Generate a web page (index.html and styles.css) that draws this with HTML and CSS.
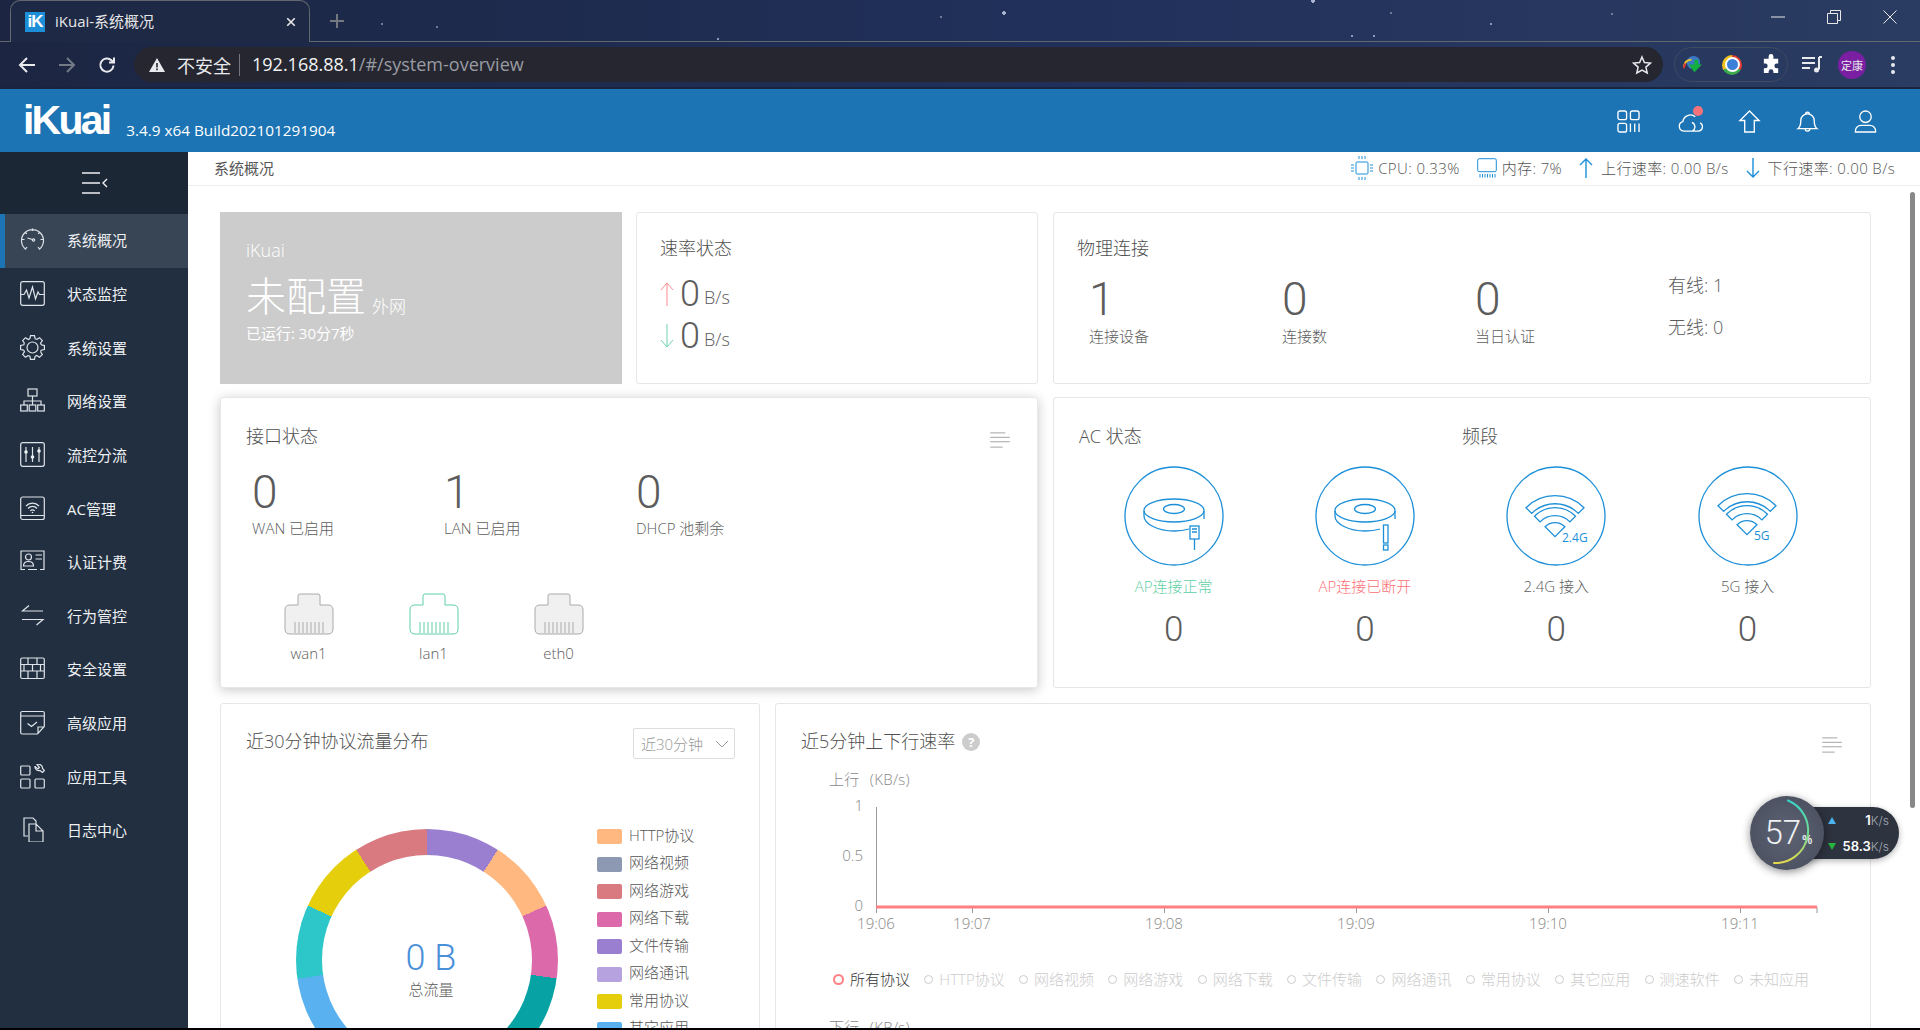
FILE: index.html
```html
<!doctype html>
<html lang="en">

<head>
<meta charset="utf-8">
<title>iKuai-系统概况</title>

<link rel="stylesheet" href="styles.css">

</head>

<body>

<div class="browser">
  <div class="tab-strip">
    <div class="tab">
      <span class="favicon">iK</span>
      <span class="tab-title">iKuai-系统概况</span>
      <svg class="tab-close" viewBox="0 0 12 12"><path d="M1.5 1.5l9 9M10.5 1.5l-9 9"/></svg>
    </div>
    <svg class="tab-new" viewBox="0 0 16 16"><path d="M8 1v14M1 8h14"/></svg>
    <div class="window-controls">
      <svg viewBox="0 0 14 14"><path d="M0 7h14"/></svg>
      <svg viewBox="0 0 14 14"><path d="M.5 3.5h10v10H.5zM3.5 3.5V.5h10v10h-3"/></svg>
      <svg viewBox="0 0 14 14"><path d="M.5.5l13 13M13.5.5l-13 13"/></svg>
    </div>
  </div>
  <div class="toolbar">
    <svg class="nav-btn" viewBox="0 0 18 18"><path d="M17 9H2M9 2L2 9l7 7"/></svg>
    <svg class="nav-btn dim" viewBox="0 0 18 18"><path d="M1 9h15M9 2l7 7-7 7"/></svg>
    <svg class="nav-btn" viewBox="0 0 18 18"><path d="M15.5 9.5a6.6 6.6 0 1 1-2-5.2L16 6.5M16 1.5v5h-5"/></svg>
    <div class="omnibox">
      <svg class="warn" viewBox="0 0 16 14"><path d="M8 0l8 14H0z"/><path class="warn-mark" d="M7.2 5h1.6v4.6H7.2zM7.2 10.6h1.6v1.6H7.2z"/></svg>
      <span class="not-secure">不安全</span>
      <span class="omni-sep"></span>
      <span class="url"><b>192.168.88.1</b>/#/system-overview</span>
      <svg class="star" viewBox="0 0 20 20"><path d="M10 2l2.4 5.5 6 .6-4.5 4 1.3 5.9L10 15l-5.2 3 1.3-5.9-4.5-4 6-.6z"/></svg>
    </div>
    <div class="ext-pill">
      <svg class="ext-ico" viewBox="0 0 22 22">
        <circle cx="12" cy="9" r="7" fill="#3a78c8"/>
        <path d="M2 13c1-5 4-7 8-7" stroke="#e8c02c" stroke-width="2" fill="none"/>
        <path d="M2 15c0-2 .5-3 1.5-5" stroke="#d33" stroke-width="2" fill="none"/>
        <path d="M7 11h6V6h4v5h4l-8 8z" fill="#12b03c"/>
      </svg>
      <span class="chrome-ico"></span>
      <svg class="ext-ico" viewBox="0 0 22 22"><path fill="#fff" d="M8 2.5a2.5 2.5 0 0 1 5 0V5h5v5h-1.500a2.500 2.500 0 0 0 0 5H18v5h-5v-1.500a2.500 2.500 0 0 0-5 0V20H3v-5h1.500a2.500 2.500 0 0 0 0-5H3V5h5z"/></svg>
    </div>
    <svg class="media-ico" viewBox="0 0 22 18"><path d="M1 2h13M1 7h13M1 12h8"/><path d="M18 1v12.500M18 1h3"/><circle class="solid" cx="15.500" cy="14" r="2.500"/></svg>
    <span class="avatar">定康</span>
    <span class="kebab"><i></i><i></i><i></i></span>
  </div>
</div>

<header class="app-header">
  <span class="logo">iKuai</span>
  <span class="version">3.4.9 x64 Build202101291904</span>
  <div class="header-icons">
    <svg viewBox="0 0 24 24"><rect x="1" y="1" width="9" height="9" rx="2"/><rect x="14" y="1" width="9" height="9" rx="2"/><rect x="1" y="14" width="9" height="9" rx="2"/><path d="M14 14v9M18.500 14v9M23 14v9"/></svg>
    <span class="cloud-wrap">
      <svg viewBox="0 0 26 24"><path d="M6 22a5 5 0 0 1-1-9.800A8 8 0 0 1 18 7M6 22h15a4.500 4.500 0 0 0 2-8.500M15 22a5 5 0 0 0-.5-9"/></svg>
      <i class="cloud-dot"></i>
    </span>
    <svg viewBox="0 0 24 24"><path d="M12 1L2 11h5v12h10V11h5z"/></svg>
    <svg viewBox="0 0 24 24"><path d="M2 19.500c3-2 3-5 3-8.500a7 7 0 0 1 14 0c0 3.500 0 6.500 3 8.500zM10 4.200a2 2 0 0 1 4 0M9.500 19.500a2.500 2.500 0 0 0 5 0"/></svg>
    <svg viewBox="0 0 24 24"><circle cx="12" cy="7" r="6"/><path d="M1.500 23v-1.500c0-3 2.500-5.500 6-5.500h9c3.500 0 6 2.500 6 5.500V23z"/></svg>
  </div>
</header>

<div class="shell">

  <nav class="side">
    <div class="side-toggle">
      <svg viewBox="0 0 26 22"><path d="M0 1h18M0 11h18M0 21h18M25 7l-4 4 4 4"/></svg>
    </div>

    <a class="side-item active">
      <svg viewBox="0 0 25 25"><path d="M6 22.500a11 11 0 1 1 13 0M12.500 1.500v2.500M2 12.500h2.500M23 12.500h-2.500M5 5l1.800 1.800M20 5l-1.800 1.800M5.500 22l1.500-2M19.500 22L18 20M7.500 11l5 1.500"/><circle cx="13.500" cy="13" r="1.200"/></svg>
      系统概况
    </a>
    <a class="side-item">
      <svg viewBox="0 0 25 25"><rect x=".7" y=".7" width="23.600" height="23.600" rx="2"/><path d="M1 13.500h3l2.500-4.500 2.500 8 3.500-11 3 12 2.500-7 1.500 2.500H24"/></svg>
      状态监控
    </a>
    <a class="side-item">
      <svg viewBox="0 0 25 25">
        <path id="cog" d="M9.840 3.800L10.500.6h4l.66 3.200A9.100 9.100 0 0 1 16.770 4.470"/>
        <use href="#cog" transform="rotate(45 12.500 12.500)"/>
        <use href="#cog" transform="rotate(90 12.500 12.500)"/>
        <use href="#cog" transform="rotate(135 12.500 12.500)"/>
        <use href="#cog" transform="rotate(180 12.500 12.500)"/>
        <use href="#cog" transform="rotate(225 12.500 12.500)"/>
        <use href="#cog" transform="rotate(270 12.500 12.500)"/>
        <use href="#cog" transform="rotate(315 12.500 12.500)"/>
        <circle cx="12.500" cy="12.500" r="5.500"/>
      </svg>
      系统设置
    </a>
    <a class="side-item">
      <svg viewBox="0 0 25 25"><rect x="8" y="1" width="9" height="7"/><path d="M12.500 8v5M4 17v-4h17v4M12.500 13v4"/><rect x=".7" y="17" width="6.600" height="6"/><rect x="9.200" y="17" width="6.600" height="6"/><rect x="17.700" y="17" width="6.600" height="6"/></svg>
      网络设置
    </a>
    <a class="side-item">
      <svg viewBox="0 0 25 25"><rect x=".7" y=".7" width="23.600" height="23.600" rx="2"/><path d="M6 5v15M12.500 5v15M19 5v15"/><circle class="solid" cx="6" cy="10" r="1.800"/><circle class="solid" cx="12.500" cy="15" r="1.800"/><circle class="solid" cx="19" cy="9" r="1.800"/></svg>
      流控分流
    </a>
    <a class="side-item">
      <svg viewBox="0 0 25 25"><rect x=".7" y="1" width="23.600" height="22.500" rx="2"/><path d="M1 19.500h23M6 10a9 9 0 0 1 13 0M8 12.500a6 6 0 0 1 9 0M10.300 14.800a3 3 0 0 1 4.400 0"/><circle class="solid" cx="12.500" cy="16.500" r=".8"/></svg>
      AC管理
    </a>
    <a class="side-item">
      <svg viewBox="0 0 25 25"><path d="M5 20.500H1V2h23v18.500h-4M8 20.500h9"/><circle cx="8.500" cy="8" r="3"/><path d="M3.500 17c0-3 2-4.500 5-4.500s5 1.500 5 4.500zM15.500 6H22M15.500 10H22"/></svg>
      认证计费
    </a>
    <a class="side-item">
      <svg viewBox="0 0 25 25"><path d="M23 8H2.500L9 2.500M2 16.500h21L16.500 22"/></svg>
      行为管控
    </a>
    <a class="side-item">
      <svg viewBox="0 0 25 25"><rect x=".7" y="2" width="23.600" height="20.500" rx="1.500"/><path d="M1 8.500h23M1 15h23M8 2v6.500M17 2v6.500M4 8.500V15M12.500 8.500V15M20.500 8.500V15M8 15v7.500M17 15v7.500"/></svg>
      安全设置
    </a>
    <a class="side-item">
      <svg viewBox="0 0 25 25"><path d="M24.300 16.500V3a1.500 1.500 0 0 0-1.500-1.500H2.200A1.500 1.500 0 0 0 .7 3v19.500A1.500 1.500 0 0 0 2.200 24h15.300zM18 24v-7h6.300M1 6h23M7.500 13.500l4 3 5.500-4.500"/></svg>
      高级应用
    </a>
    <a class="side-item">
      <svg viewBox="0 0 25 25"><rect x=".7" y="2" width="9.300" height="9" rx="1"/><rect x=".7" y="15" width="9.300" height="9" rx="1"/><rect x="15" y="15" width="9.300" height="9" rx="1"/><path d="M15 2.500l3 2.500 1.500-1.500-2.500-3a4 4 0 0 1 5.500 4l2 2-2 2-2.500-2a4 4 0 0 1-5-4.500z"/></svg>
      应用工具
    </a>
    <a class="side-item">
      <svg viewBox="0 0 25 25"><path d="M8 19H4V1h9l3 3v3M9 7h7l7 7v11H9zM16 7v7h7"/></svg>
      日志中心
    </a>
  </nav>

  <main class="main">
    <div class="crumbs">
      <span class="crumb-name">系统概况</span>
      <div class="top-stats">
        <span class="top-stat">
          <svg class="stat-cpu" viewBox="0 0 22 24"><rect x="5" y="6" width="12" height="12" rx="1"/><path d="M8 0v3M11 0v3M14 0v3M8 21v3M11 21v3M14 21v3M0 9h3M0 12h3M0 15h3M19 9h3M19 12h3M19 15h3"/></svg>
          CPU: 0.33%
        </span>
        <span class="top-stat">
          <svg class="stat-mem" viewBox="0 0 20 20"><rect x=".7" y=".7" width="18.600" height="13" rx="1.500"/><path d="M3 16v3.500M5.500 16v3.500M8 16v3.500M10.500 16v3.500M13 16v3.500M15.500 16v3.500M18 16v3.500" /></svg>
          内存: 7%
        </span>
        <span class="top-stat">
          <svg class="stat-arrow" viewBox="0 0 14 20"><path d="M7 20V1M1 7l6-6 6 6"/></svg>
          上行速率: 0.00 B/s
        </span>
        <span class="top-stat">
          <svg class="stat-arrow" viewBox="0 0 14 20"><path d="M7 0v19M1 13l6 6 6-6"/></svg>
          下行速率: 0.00 B/s
        </span>
      </div>
    </div>

    <div class="content">

      <div class="row-halves row-top">
        <div class="row-pair">
          <section class="wan-card">
            <div class="wan-brand">iKuai</div>
            <div class="wan-state">未配置<small>外网</small></div>
            <div class="wan-uptime">已运行: 30分7秒</div>
          </section>

          <section class="card rate-card">
            <h2 class="card-title">速率状态</h2>
            <div class="rate-row">
              <svg class="rate-up" viewBox="0 0 14 24"><path d="M7 24V1M1 8l6-7 6 7"/></svg>
              <span class="rate-num">0</span><span class="rate-unit">B/s</span>
            </div>
            <div class="rate-row">
              <svg class="rate-down" viewBox="0 0 14 24"><path d="M7 0v23M1 16l6 7 6-7"/></svg>
              <span class="rate-num">0</span><span class="rate-unit">B/s</span>
            </div>
          </section>
        </div>

        <section class="card phys-card">
          <h2 class="card-title">物理连接</h2>
          <div class="phys-stats">
            <div class="stat"><div class="stat-num">1</div><div class="stat-label">连接设备</div></div>
            <div class="stat"><div class="stat-num">0</div><div class="stat-label">连接数</div></div>
            <div class="stat"><div class="stat-num">0</div><div class="stat-label">当日认证</div></div>
            <div class="phys-links">
              <div>有线: 1</div>
              <div>无线: 0</div>
            </div>
          </div>
        </section>
      </div>

      <div class="row-halves row-mid">
        <section class="card tall iface-card">
          <div class="card-head">
            <h2 class="card-title">接口状态</h2>
            <svg class="list-ico" viewBox="0 0 22 18"><path d="M0 1h17M0 6h22M0 11h22M0 17h14"/></svg>
          </div>
          <div class="iface-stats">
            <div class="stat"><div class="stat-num">0</div><div class="stat-label">WAN 已启用</div></div>
            <div class="stat"><div class="stat-num">1</div><div class="stat-label">LAN 已启用</div></div>
            <div class="stat"><div class="stat-num">0</div><div class="stat-label">DHCP 池剩余</div></div>
          </div>
          <div class="ports">
            <div class="port">
              <svg viewBox="0 0 50 42"><path d="M14 12V3q0-2 2-2h18q2 0 2 2v9h8q5 0 5 5v19q0 5-5 5H6q-5 0-5-5V17q0-5 5-5z"/><path class="pins" d="M11 29v11M15 29v11M19 29v11M23 29v11M27 29v11M31 29v11M35 29v11M39 29v11"/></svg>
              <span>wan1</span>
            </div>
            <div class="port up">
              <svg viewBox="0 0 50 42"><path d="M14 12V3q0-2 2-2h18q2 0 2 2v9h8q5 0 5 5v19q0 5-5 5H6q-5 0-5-5V17q0-5 5-5z"/><path class="pins" d="M11 29v11M15 29v11M19 29v11M23 29v11M27 29v11M31 29v11M35 29v11M39 29v11"/></svg>
              <span>lan1</span>
            </div>
            <div class="port">
              <svg viewBox="0 0 50 42"><path d="M14 12V3q0-2 2-2h18q2 0 2 2v9h8q5 0 5 5v19q0 5-5 5H6q-5 0-5-5V17q0-5 5-5z"/><path class="pins" d="M11 29v11M15 29v11M19 29v11M23 29v11M27 29v11M31 29v11M35 29v11M39 29v11"/></svg>
              <span>eth0</span>
            </div>
          </div>
        </section>

        <section class="card tall ac-card">
          <div class="ac-head">
            <h2 class="card-title">AC 状态</h2>
            <h2 class="card-title">频段</h2>
          </div>
          <div class="ac-grid">
            <div class="ac-item">
              <svg viewBox="0 0 100 100"><circle cx="50" cy="50" r="49"/><ellipse cx="50" cy="44.500" rx="30" ry="11.500"/><ellipse cx="50" cy="43" rx="10.500" ry="4.500"/><path d="M20 45v5c0 8 14 15 30 15 6 0 11-.8 15-2M80 45v8"/><rect x="66" y="60" width="9" height="13"/><path d="M70.500 73v11M68 63h5M68 66h5"/></svg>
              <div class="ac-label ok">AP连接正常</div>
              <div class="ac-num">0</div>
            </div>
            <div class="ac-item">
              <svg viewBox="0 0 100 100"><circle cx="50" cy="50" r="49"/><ellipse cx="50" cy="44.500" rx="30" ry="11.500"/><ellipse cx="50" cy="43" rx="10.500" ry="4.500"/><path d="M20 45v5c0 8 14 15 30 15 6 0 11-.8 15-2M80 45v8"/><rect x="68.500" y="59" width="4.500" height="18"/><rect x="68.500" y="79" width="4.500" height="5"/></svg>
              <div class="ac-label bad">AP连接已断开</div>
              <div class="ac-num">0</div>
            </div>
            <div class="ac-item">
              <svg viewBox="0 0 100 100"><circle cx="50" cy="50" r="49"/><path d="M20 41.700A41 41 0 0 1 78 41.700L72.300 47.400A33 33 0 0 0 25.700 47.400zM28.500 50.200A29 29 0 0 1 69.500 50.200L63.850 55.850A21 21 0 0 0 34.150 55.850zM39.100 60.800A14 14 0 0 1 58.900 60.800L49 70.700z"/><text x="56" y="76">2.4G</text></svg>
              <div class="ac-label">2.4G 接入</div>
              <div class="ac-num">0</div>
            </div>
            <div class="ac-item">
              <svg viewBox="0 0 100 100"><circle cx="50" cy="50" r="49"/><path d="M20 39.700A41 41 0 0 1 78 39.700L72.300 45.400A33 33 0 0 0 25.700 45.400zM28.500 48.200A29 29 0 0 1 69.500 48.200L63.850 53.850A21 21 0 0 0 34.150 53.850zM39.100 58.800A14 14 0 0 1 58.900 58.800L49 68.700z"/><text x="56" y="74">5G</text></svg>
              <div class="ac-label">5G 接入</div>
              <div class="ac-num">0</div>
            </div>
          </div>
        </section>
      </div>

      <div class="row-bottom">
        <section class="card dist-card">
          <div class="card-head">
            <h2 class="card-title">近30分钟协议流量分布</h2>
            <div class="range-select">
              近30分钟
              <svg viewBox="0 0 14 8"><path d="M1 1l6 6 6-6"/></svg>
            </div>
          </div>
          <div class="dist-body">
            <div class="donut">
              <div class="donut-hole">
                <div class="donut-total">0 B</div>
                <div class="donut-label">总流量</div>
              </div>
            </div>
            <ul class="legend">
              <li><i class="sw-http"></i>HTTP协议</li>
              <li><i class="sw-video"></i>网络视频</li>
              <li><i class="sw-game"></i>网络游戏</li>
              <li><i class="sw-down"></i>网络下载</li>
              <li><i class="sw-file"></i>文件传输</li>
              <li><i class="sw-msg"></i>网络通讯</li>
              <li><i class="sw-common"></i>常用协议</li>
              <li><i class="sw-other"></i>其它应用</li>
            </ul>
          </div>
        </section>

        <section class="card rate-chart-card">
          <div class="card-head">
            <h2 class="card-title">近5分钟上下行速率<span class="help">?</span></h2>
            <svg class="list-ico" viewBox="0 0 22 18"><path d="M0 1h17M0 6h22M0 11h22M0 17h14"/></svg>
          </div>
          <svg class="chart" viewBox="0 0 1040 170">
            <text class="axis-name" x="28" y="21">上行 (KB/s)</text>
            <text class="axis-text" x="62" y="47" text-anchor="end">1</text>
            <text class="axis-text" x="62" y="97" text-anchor="end">0.5</text>
            <text class="axis-text" x="62" y="147" text-anchor="end">0</text>
            <path class="axis-line" d="M75.500 43v106M171.500 143v6M363.500 143v6M555.500 143v6M747.500 143v6M939.500 143v6M1016 143v6"/>
            <path class="series" d="M75 143h941"/>
            <text class="axis-text" x="75" y="165" text-anchor="middle">19:06</text>
            <text class="axis-text" x="171" y="165" text-anchor="middle">19:07</text>
            <text class="axis-text" x="363" y="165" text-anchor="middle">19:08</text>
            <text class="axis-text" x="555" y="165" text-anchor="middle">19:09</text>
            <text class="axis-text" x="747" y="165" text-anchor="middle">19:10</text>
            <text class="axis-text" x="939" y="165" text-anchor="middle">19:11</text>
          </svg>
          <ul class="chart-legend">
            <li class="on">所有协议</li>
            <li>HTTP协议</li>
            <li>网络视频</li>
            <li>网络游戏</li>
            <li>网络下载</li>
            <li>文件传输</li>
            <li>网络通讯</li>
            <li>常用协议</li>
            <li>其它应用</li>
            <li>测速软件</li>
            <li>未知应用</li>
          </ul>
          <div class="chart-next">下行 (KB/s)</div>
        </section>
      </div>

    </div>

    <div class="scroll-thumb"></div>

    <div class="speed-widget">
      <div class="widget-pill">
        <div class="widget-row"><i class="w-up"></i><b>1</b><span>K/s</span></div>
        <div class="widget-row"><i class="w-down"></i><b>58.3</b><span>K/s</span></div>
      </div>
      <div class="widget-dial">
        <svg viewBox="0 0 74 74">
          <defs><linearGradient id="arc" x1="0" y1="0" x2="0" y2="1"><stop offset="0" stop-color="#35d6c6"/><stop offset=".6" stop-color="#7ddc88"/><stop offset="1" stop-color="#e6d84a"/></linearGradient></defs>
          <path d="M38 4.500A32.500 32.500 0 0 1 24 67"/>
        </svg>
        <span class="dial-num">57</span><span class="dial-pct">%</span>
      </div>
    </div>
  </main>
</div>

</body>

</html>
```

FILE: styles.css
```css
* {
  box-sizing: border-box;
}

html,
body {
  background: #000;
  height: 1030px;
  margin: 0;
  overflow: hidden;
  width: 1920px;
}

body {
  color: #5c5c5c;
  font-family: "Open Sans", "Noto Sans CJK SC", sans-serif;
  font-size: 15px;
  font-weight: 300;
}

svg {
  display: block;
  fill: none;
  flex: none;
  stroke: currentColor;
}

h2 {
  font-weight: 300;
  margin: 0;
}

ul {
  list-style: none;
  margin: 0;
  padding: 0;
}

/* browser chrome */

.browser {
  background-color: #1e2a47;
  background-image:
    radial-gradient(circle 1.5px at 382px 24px, #6f7c98 90%, transparent),
    radial-gradient(circle 1.5px at 437px 27px, #6f7c98 90%, transparent),
    radial-gradient(circle 1.5px at 718px 39px, #8d9ab5 90%, transparent),
    radial-gradient(circle 1.5px at 941px 17px, #6f7c98 90%, transparent),
    radial-gradient(circle 2px at 1004px 13px, #a7b3cc 90%, transparent),
    radial-gradient(circle 2px at 1313px 1px, #a7b3cc 90%, transparent),
    radial-gradient(circle 1.5px at 1391px 13px, #6f7c98 90%, transparent),
    radial-gradient(circle 1.5px at 1612px 14px, #6f7c98 90%, transparent),
    radial-gradient(circle 1.5px at 1491px 24px, #8d9ab5 90%, transparent),
    radial-gradient(circle 1.5px at 1352px 36px, #8d9ab5 90%, transparent),
    radial-gradient(circle 1.5px at 1374px 36px, #8d9ab5 90%, transparent),
    linear-gradient(90deg, #1c2642, #20305a 55%, #2b3c62);
  border-bottom: 2px solid #1a2340;
  height: 89px;
}

.tab-strip {
  align-items: flex-start;
  border-bottom: 1px solid #63686f;
  color: #e8e8e8;
  display: flex;
  height: 42px;
  padding-left: 10px;
}

.tab {
  align-items: center;
  background: #1d2945;
  border: 1px solid #63686f;
  border-bottom: 0;
  border-radius: 10px 10px 0 0;
  display: flex;
  height: 42px;
  padding: 0 13px 0 14px;
  width: 300px;
}

.favicon {
  background: #1c8fd8;
  color: #fff;
  font-family: "Liberation Sans", sans-serif;
  font-size: 17px;
  font-weight: 700;
  height: 20px;
  letter-spacing: -1px;
  line-height: 20px;
  text-align: center;
  width: 20px;
}

.tab-title {
  flex: 1;
  font-size: 15px;
  font-weight: 400;
  margin-left: 10px;
  padding-bottom: 2px;
}

.tab-close {
  height: 10px;
  stroke-width: 2;
  width: 10px;
}

.tab-new {
  color: #74797f;
  height: 16px;
  margin: 13px 0 0 19px;
  stroke-width: 2;
  width: 16px;
}

.window-controls {
  display: flex;
  gap: 42px;
  margin-left: auto;
  padding: 10px 23px 0 0;
}

.window-controls svg {
  height: 14px;
  stroke-width: 1;
  width: 14px;
}

.toolbar {
  align-items: center;
  color: #e8eaed;
  display: flex;
  height: 45px;
  padding: 0 0 0 18px;
}

.nav-btn {
  height: 18px;
  margin-right: 22px;
  stroke-width: 2;
  width: 18px;
}

.nav-btn.dim {
  color: #737a85;
}

.omnibox {
  align-items: center;
  background: #25262f;
  border-radius: 18px;
  display: flex;
  font-weight: 400;
  height: 35px;
  margin-left: -4px;
  padding: 0 11px 0 15px;
  width: 1529px;
}

.warn {
  fill: #e8eaed;
  height: 14px;
  stroke: none;
  width: 16px;
}

.warn-mark {
  fill: #25262f;
}

.not-secure {
  font-size: 18px;
  margin-left: 12px;
}

.omni-sep {
  background: #75777e;
  height: 22px;
  margin: 0 12px 0 8px;
  width: 1px;
}

.url {
  color: #9a9ca3;
  flex: 1;
  font-size: 18px;
  padding-bottom: 1px;
}

.url b {
  color: #f1f3f4;
  font-weight: 400;
}

.star {
  height: 20px;
  stroke-width: 1.500;
  width: 20px;
}

.ext-pill {
  align-items: center;
  border: 1px solid #3f4a63;
  border-radius: 18px;
  display: flex;
  gap: 19px;
  height: 35px;
  margin-left: 11px;
  padding: 0 7px;
  width: 114px;
}

.ext-ico {
  height: 21px;
  stroke: none;
  width: 21px;
}

.chrome-ico {
  align-items: center;
  background: conic-gradient(#e23b2e 0 120deg, #3cab4b 120deg 240deg, #f1c21b 240deg 360deg);
  border-radius: 50%;
  display: flex;
  flex: none;
  height: 20px;
  justify-content: center;
  width: 20px;
}

.chrome-ico::after {
  background: #3a7fd8;
  border: 2px solid #fff;
  border-radius: 50%;
  content: "";
  height: 11px;
  width: 11px;
}

.media-ico {
  height: 18px;
  margin-left: 13px;
  stroke-width: 2;
  width: 22px;
}

.solid {
  fill: currentColor;
  stroke: none;
}

.avatar {
  align-items: center;
  background: #7b1fa2;
  border-radius: 50%;
  display: flex;
  font-family: "Noto Sans CJK SC", sans-serif;
  font-size: 11px;
  font-weight: 400;
  height: 28px;
  justify-content: center;
  margin-left: 15px;
  width: 28px;
}

.kebab {
  display: flex;
  flex-direction: column;
  gap: 3px;
  margin-left: 25px;
}

.kebab i {
  background: #e8eaed;
  border-radius: 50%;
  height: 4px;
  width: 4px;
}

/* app header */

.app-header {
  align-items: flex-end;
  background: #1c74b4;
  color: #fff;
  display: flex;
  height: 63px;
  padding: 0 0 12px 23px;
}

.logo {
  font-family: "Liberation Sans", sans-serif;
  font-size: 41px;
  font-weight: 700;
  letter-spacing: -2.800px;
  line-height: 47px;
  margin-bottom: -4px;
}

.version {
  font-size: 15.300px;
  font-weight: 400;
  line-height: 20px;
  margin-left: 17px;
}

.header-icons {
  align-items: center;
  align-self: center;
  display: flex;
  gap: 35px;
  margin: 13px 43px 0 auto;
}

.header-icons svg {
  height: 23px;
  stroke-width: 1.400;
  width: 23px;
}

.cloud-wrap {
  display: block;
  margin-left: 3px;
  position: relative;
}

.cloud-wrap svg {
  width: 25px;
}

.cloud-dot {
  background: #f9727a;
  border-radius: 50%;
  height: 10px;
  position: absolute;
  right: 0;
  top: -4px;
  width: 10px;
}

/* layout */

.shell {
  display: flex;
  height: 876px;
}

.side {
  background: #222f40;
  color: #eef1f4;
  flex: none;
  font-weight: 400;
  width: 188px;
}

.side-toggle {
  align-items: center;
  background: #1c2735;
  display: flex;
  height: 62px;
  padding-left: 82px;
}

.side-toggle svg {
  height: 22px;
  stroke-width: 1.400;
  width: 26px;
}

.side-item {
  align-items: center;
  display: flex;
  gap: 22px;
  height: 53.650px;
  padding: 0 0 2px 20px;
}

.side-item svg {
  height: 25px;
  stroke: #dfe4ea;
  stroke-width: 1.200;
  width: 25px;
}

.side-item.active {
  background: #384555;
  box-shadow: inset 5px 0 0 #1c74b4;
}

.main {
  background: #fff;
  flex: 1;
  min-width: 0;
  overflow: hidden;
  position: relative;
}

.crumbs {
  align-items: center;
  border-bottom: 1px solid #eee;
  color: #555;
  display: flex;
  height: 34px;
  justify-content: space-between;
  padding: 0 25px 2px 26px;
}

.crumb-name {
  font-weight: 400;
}

.top-stats {
  display: flex;
  gap: 17px;
}

.top-stat {
  align-items: center;
  display: flex;
  gap: 5px;
  letter-spacing: 0.380px;
}

.top-stat svg {
  color: #1c8fd8;
}

.stat-cpu {
  height: 24px;
  width: 22px;
}

.stat-mem {
  height: 20px;
  width: 20px;
}

.stat-arrow {
  height: 20px;
  margin-right: 3px;
  stroke-width: 1.400;
  width: 14px;
}

.content {
  padding: 26px 49px 0 32px;
}

.row-halves {
  display: grid;
  gap: 15px;
  grid-template-columns: repeat(2, minmax(0, 1fr));
}

.row-top {
  margin-bottom: 13px;
}

.row-mid {
  margin-bottom: 15px;
}

.row-pair {
  display: grid;
  gap: 14px;
  grid-template-columns: repeat(2, minmax(0, 1fr));
}

.row-bottom {
  display: grid;
  gap: 15px;
  grid-template-columns: 540px minmax(0, 1fr);
}

/* cards */

.card {
  background: #fff;
  border: 1px solid #e6e6e6;
  border-radius: 3px;
  height: 172px;
  padding: 23px 23px 0;
}

.card.tall {
  height: 291px;
  padding: 26px 25px 0;
}

.card-title {
  color: #4f4f4f;
  font-size: 18px;
  line-height: 24px;
  white-space: nowrap;
}

.card-head {
  align-items: flex-start;
  display: flex;
  justify-content: space-between;
}

.list-ico {
  color: #999;
  height: 16px;
  margin: 8px 1px 0 0;
  width: 22px;
}

.wan-card {
  background: #ccc;
  color: #fff;
  height: 172px;
  padding: 25px 26px 0;
}

.wan-brand {
  font-size: 18px;
  line-height: 26px;
}

.wan-state {
  font-size: 40px;
  line-height: 33px;
  margin-top: 16px;
}

.wan-state small {
  font-size: 17px;
  margin-left: 6px;
  vertical-align: -2px;
}

.wan-uptime {
  font-weight: 400;
  line-height: 20px;
}

.rate-row {
  align-items: center;
  display: flex;
  height: 42px;
}

.rate-row:first-of-type {
  margin-top: 13px;
}

.rate-up,
.rate-down {
  height: 24px;
  margin-right: 6px;
  width: 14px;
}

.rate-up {
  color: #fd8c91;
}

.rate-down {
  color: #6fd3ae;
}

.rate-num,
.stat-num,
.ac-num,
.donut-total,
.dial-num {
  font-family: "Roboto", sans-serif;
}

.rate-num {
  font-size: 36px;
  line-height: 42px;
}

.rate-unit {
  font-size: 18px;
  margin: 6px 0 0 4px;
}

.phys-stats {
  display: flex;
  margin-top: 4px;
  padding-left: 12px;
}

.stat {
  width: 193px;
}

.phys-stats .stat {
  padding-top: 12px;
}

.stat-num {
  font-size: 46px;
  line-height: 46px;
}

.stat-label {
  line-height: 22px;
  margin-top: 3px;
}

.phys-links {
  font-size: 18px;
  line-height: 42px;
}

.iface-stats {
  display: flex;
  margin-top: 21px;
  padding-left: 6px;
}

.iface-stats .stat {
  width: 192px;
}

.iface-stats .stat-label {
  margin-top: 2px;
}

.ports {
  display: flex;
  margin-top: 54px;
}

.port {
  align-items: center;
  display: flex;
  flex-direction: column;
  gap: 7px;
  line-height: 22px;
  width: 125px;
}

.port svg {
  fill: #f0f0f0;
  height: 42px;
  stroke: #aaa;
  width: 50px;
}

.port .pins {
  fill: none;
  stroke: #aaa;
}

.port.up svg {
  fill: #fff;
  stroke: #5fd0a5;
}

.port.up .pins {
  stroke: #5fd0a5;
}

.iface-card {
  border-color: #e8e8e8;
  box-shadow: 0 2px 12px rgba(0, 0, 0, 0.22);
}

.ac-head {
  display: flex;
}

.ac-head h2 {
  width: 384px;
}

.ac-grid {
  display: grid;
  grid-template-columns: repeat(4, 191.300px);
  margin: 18px 0 0 -1px;
}

.ac-item {
  align-items: center;
  display: flex;
  flex-direction: column;
}

.ac-item svg {
  color: #1c8fd8;
  height: 100px;
  stroke-width: 1.300;
  width: 100px;
}

.ac-item text {
  fill: #1c8fd8;
  font-size: 12px;
  font-weight: 400;
  stroke: none;
}

.ac-label {
  line-height: 22px;
  margin-top: 9px;
}

.ac-label.ok {
  color: #5fd0a5;
}

.ac-label.bad {
  color: #fb6f76;
}

.ac-num {
  font-size: 35px;
  line-height: 36px;
  margin-top: 15px;
}

/* bottom row */

.dist-card,
.rate-chart-card {
  height: 600px;
  padding: 25px 24px 0 25px;
}

.range-select {
  align-items: center;
  border: 1px solid #ddd;
  border-radius: 2px;
  color: #999;
  display: flex;
  height: 31px;
  justify-content: space-between;
  margin-top: -1px;
  padding: 0 5px 0 7px;
  width: 102px;
}

.range-select svg {
  height: 8px;
  width: 14px;
}

.dist-body {
  display: flex;
  gap: 39px;
  margin-top: 70px;
  padding-left: 50px;
}

.donut {
  align-items: center;
  background: conic-gradient(
    #9a7fd1 0 32.700deg,
    #ffb980 32.700deg 65.400deg,
    #dc69aa 65.400deg 98.100deg,
    #07a2a4 98.100deg 130.800deg,
    #8d98b3 130.800deg 163.600deg,
    #b6a2de 163.600deg 196.400deg,
    #d87a80 196.400deg 229.100deg,
    #5ab1ef 229.100deg 261.800deg,
    #2ec7c9 261.800deg 294.500deg,
    #e5cf0d 294.500deg 327.300deg,
    #d87a80 327.300deg 360deg
  );
  border-radius: 50%;
  display: flex;
  flex: none;
  height: 262px;
  justify-content: center;
  width: 262px;
}

.donut-hole {
  align-items: center;
  background: #fff;
  border-radius: 50%;
  display: flex;
  flex-direction: column;
  height: 210px;
  justify-content: center;
  padding: 16px 0 0 8px;
  width: 210px;
}

.donut-total {
  color: #4a90d9;
  font-size: 36px;
  line-height: 44px;
}

.donut-label {
  line-height: 22px;
  margin-top: -2px;
}

.legend {
  margin-top: -6px;
}

.legend li {
  align-items: center;
  color: #555;
  display: flex;
  gap: 7px;
  height: 27.500px;
  padding-bottom: 5px;
  white-space: nowrap;
}

.legend i {
  border-radius: 2px;
  height: 15px;
  margin-top: 5px;
  width: 25px;
}

.sw-http { background: #ffb980; }
.sw-video { background: #8d98b3; }
.sw-game { background: #d87a80; }
.sw-down { background: #dc69aa; }
.sw-file { background: #9a7fd1; }
.sw-msg { background: #b6a2de; }
.sw-common { background: #e5cf0d; }
.sw-other { background: #5ab1ef; }

.help {
  background: #ccc;
  border-radius: 50%;
  color: #fff;
  display: inline-block;
  font-size: 13px;
  font-weight: 700;
  height: 18px;
  line-height: 18px;
  margin-left: 7px;
  text-align: center;
  vertical-align: 1px;
  width: 18px;
}

.rate-chart-card .list-ico {
  margin-right: 3px;
  margin-top: 8px;
}

.chart {
  height: 170px;
  margin-top: 11px;
  width: 1040px;
}

.axis-text,
.axis-name {
  fill: #888;
  font-size: 15px;
  stroke: none;
}

.axis-name {
  letter-spacing: 0.300px;
  word-spacing: 6px;
}

.axis-line {
  stroke: #999;
  stroke-width: 1;
}

.series {
  stroke: #ff7f82;
  stroke-width: 3;
}

.chart-legend {
  color: #ccc;
  display: flex;
  gap: 14.350px;
  line-height: 22px;
  margin-top: 34px;
  padding-left: 32px;
}

.chart-legend li {
  align-items: center;
  display: flex;
  gap: 6px;
  white-space: nowrap;
}

.chart-legend li::before {
  border: 1px solid #ccc;
  border-radius: 50%;
  content: "";
  height: 7px;
  width: 7px;
}

.chart-legend .on {
  color: #333;
}

.chart-legend .on::before {
  border: 2px solid #ff7f82;
}

.chart-next {
  color: #888;
  letter-spacing: 0.300px;
  line-height: 22px;
  margin-top: 26px;
  padding-left: 28px;
  word-spacing: 6px;
}

.scroll-thumb {
  background: #888;
  border-radius: 3px;
  height: 616px;
  position: absolute;
  right: 5px;
  top: 40px;
  width: 5px;
}

/* floating speed widget */

.speed-widget {
  height: 74px;
  left: 1562px;
  position: absolute;
  top: 644px;
  width: 150px;
}

.widget-pill {
  background: #2d333f;
  border-radius: 0 26px 26px 0;
  box-shadow: 0 2px 6px rgba(0, 0, 0, 0.3);
  color: #fff;
  display: flex;
  flex-direction: column;
  font-family: "Inter", sans-serif;
  height: 52px;
  left: 36px;
  padding-left: 38px;
  position: absolute;
  top: 11px;
  width: 113px;
}

.widget-row {
  align-items: center;
  display: flex;
  flex: 1;
  font-size: 13px;
  justify-content: flex-end;
  padding-right: 10px;
  position: relative;
}

.widget-row b {
  font-weight: 600;
}

.widget-row span {
  color: #a3a9b3;
  font-size: 12px;
}

.widget-row i {
  border-left: 4px solid transparent;
  border-right: 4px solid transparent;
  height: 0;
  left: 4px;
  position: absolute;
  width: 0;
}

.w-up {
  border-bottom: 7px solid #4cb4ee;
}

.w-down {
  border-top: 7px solid #27b53f;
}

.widget-dial {
  align-items: baseline;
  background: radial-gradient(circle, #5e6373, #474c5c);
  border-radius: 50%;
  box-shadow: 0 2px 8px rgba(0, 0, 0, 0.45);
  color: #eef0f3;
  display: flex;
  height: 74px;
  justify-content: center;
  left: 0;
  line-height: 74px;
  padding-left: 3px;
  position: absolute;
  top: 0;
  width: 74px;
}

.widget-dial svg {
  height: 74px;
  left: 0;
  position: absolute;
  stroke: url(#arc);
  stroke-linecap: round;
  stroke-width: 2;
  top: 0;
  width: 74px;
}

.dial-num {
  font-size: 33px;
}

.dial-pct {
  font-size: 12px;
  font-weight: 600;
  margin-left: 1px;
}
```
